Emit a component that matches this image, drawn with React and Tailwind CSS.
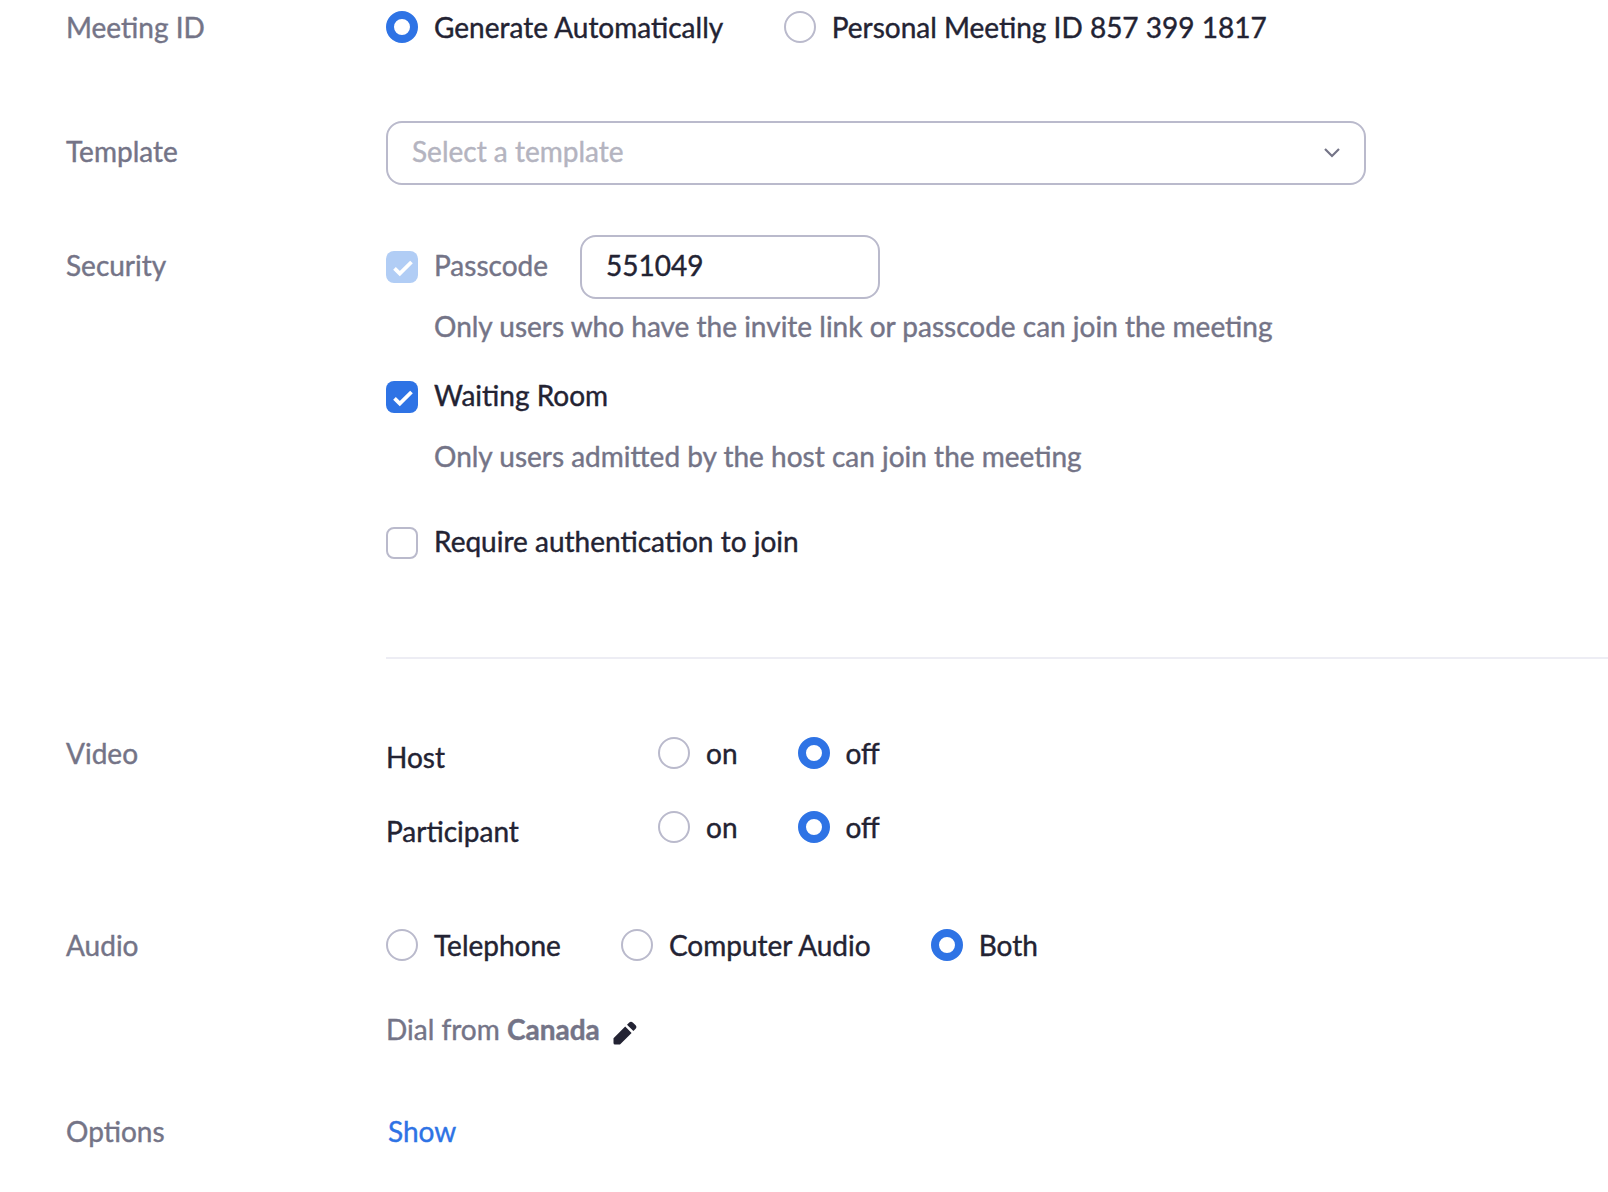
const ink = "text-[#232333]";
const muted = "text-[#747487]";

function Radio({ on, label, className = "" }) {
  return (
    <label className={"flex h-8 items-center " + className}>
      <span className={"h-8 w-8 shrink-0 rounded-full bg-white " + (on ? "border-8 border-[#2e73e5]" : "border-2 border-[#babacc]")} />
      <span className={"ml-4 whitespace-nowrap " + ink}>{label}</span>
    </label>
  );
}

function Check({ state }) {
  const style = state === "off" ? "border-2 border-[#babacc] bg-white" : state === "disabled" ? "bg-[#b1cdf5]" : "bg-[#2e73e5]";
  return (
    <span className={"flex h-8 w-8 shrink-0 items-center justify-center rounded-lg " + style}>
      {state !== "off" && (
        <svg width="32" height="32" viewBox="0 0 32 32" fill="none" stroke="white" strokeWidth="3.8">
          <path d="M8.5 17.3l5.3 5.2L25.5 11" />
        </svg>
      )}
    </span>
  );
}

function Row({ label, className, children }) {
  return (
    <section className={"flex " + className}>
      <div className={"w-80 shrink-0 whitespace-nowrap " + muted}>{label}</div>
      <div className="min-w-0 flex-1">{children}</div>
    </section>
  );
}

export default function App() {
  return (
    <main className="h-[1192px] w-[1608px] overflow-hidden bg-white pl-[66px] pt-[11px] font-['Lato',sans-serif] text-[28px] leading-8 [-webkit-text-stroke:0.4px]">
      <Row label="Meeting ID" className="h-[110px]">
        <div className="flex">
          <Radio on label="Generate Automatically" />
          <Radio label="Personal Meeting ID 857 399 1817" className="ml-[60.5px]" />
        </div>
      </Row>
      <Row label={<div className="pt-3.5">Template</div>} className="h-[114px]">
        <div className="flex h-16 w-[980px] items-center justify-between rounded-2xl border-2 border-[#babacc] pl-6 pr-6 text-[#b4b4c0]">
          <span className="pb-1">Select a template</span>
          <svg className="mb-px" width="16" height="10" viewBox="0 0 16 10" fill="none" stroke="#747487" strokeWidth="2.2"><path d="M1 1l7 7 7-7" /></svg>
        </div>
      </Row>
      <Row label={<div className="pt-3.5">Security</div>} className="h-[423px]">
        <div className={"flex h-16 items-center " + muted}>
          <Check state="disabled" />
          <span className="ml-4 w-[146px] pb-1">Passcode</span>
          <div className={"flex h-16 w-[300px] items-center rounded-2xl border-2 border-[#babacc] pb-1 pl-6 " + ink}>551049</div>
        </div>
        <p className={"ml-12 mt-[11px] " + muted}>Only users who have the invite link or passcode can join the meeting</p>
        <div className="mt-[39px] flex h-8 items-center"><Check state="on" /><span className={"ml-4 pb-1 " + ink}>Waiting Room</span></div>
        <p className={"ml-12 mt-[27px] " + muted}>Only users admitted by the host can join the meeting</p>
        <div className="mt-[55px] flex h-8 items-center"><Check state="off" /><span className={"ml-4 pb-1 " + ink}>Require authentication to join</span></div>
        <hr className="mt-[98px] border-t-2 border-[#ededf4]" />
      </Row>
      <Row label="Video" className="mt-[79px] h-[192px]">
        {["Host", "Participant"].map((name) => (
          <div key={name} className="flex h-[74px]">
            <span className={"w-[272px] pt-1 " + ink}>{name}</span>
            <Radio label="on" />
            <Radio on label="off" className="ml-[60px]" />
          </div>
        ))}
      </Row>
      <Row label="Audio" className="h-[186px]">
        <div className="flex">
          <Radio label="Telephone" />
          <Radio label="Computer Audio" className="ml-[60px]" />
          <Radio on label="Both" className="ml-[60px]" />
        </div>
        <div className={"mt-[52px] flex h-8 items-start " + muted}>
          <span>Dial from <b>Canada</b></span>
          <svg className="ml-[13px] mt-2" width="24" height="24" viewBox="0 0 24 24" fill="#232333"><path d="M.5 17.2L12.2 5.5l6.4 6.4L7 23.5H2Q.5 23.5.5 22zM14 3.7L16 1.7q2-2 4 0l2.4 2.4q2 2 0 4L20.4 10z" /></svg>
        </div>
      </Row>
      <Row label="Options"><a className="ml-0.5 text-[#2e73e5]">Show</a></Row>
    </main>
  );
}
